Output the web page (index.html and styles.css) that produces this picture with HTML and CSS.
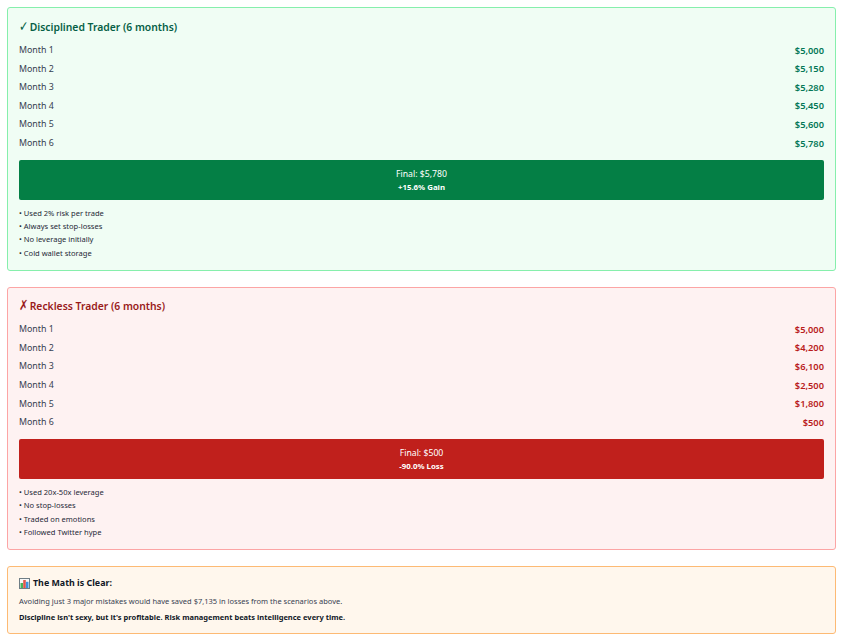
FILE: index.html
```html
<!DOCTYPE html>
<html lang="en">
<head>
<meta charset="utf-8">
<title>Trader comparison</title>
<link rel="stylesheet" href="styles.css">
</head>
<body>
<section class="card card-green">
  <h3 class="title title-green"><span class="mark">✓</span> Disciplined Trader (6 months)</h3>
  <div class="rows">
    <div class="row"><span>Month 1</span><strong class="val-green">$5,000</strong></div>
    <div class="row"><span>Month 2</span><strong class="val-green">$5,150</strong></div>
    <div class="row"><span>Month 3</span><strong class="val-green">$5,280</strong></div>
    <div class="row"><span>Month 4</span><strong class="val-green">$5,450</strong></div>
    <div class="row"><span>Month 5</span><strong class="val-green">$5,600</strong></div>
    <div class="row"><span>Month 6</span><strong class="val-green">$5,780</strong></div>
  </div>
  <div class="final final-green">
    <div class="final-main">Final: $5,780</div>
    <div class="final-sub">+15.6% Gain</div>
  </div>
  <ul class="notes">
    <li>• Used 2% risk per trade</li>
    <li>• Always set stop-losses</li>
    <li>• No leverage initially</li>
    <li>• Cold wallet storage</li>
  </ul>
</section>
<section class="card card-red">
  <h3 class="title title-red"><span class="mark">✗</span> Reckless Trader (6 months)</h3>
  <div class="rows">
    <div class="row"><span>Month 1</span><strong class="val-red">$5,000</strong></div>
    <div class="row"><span>Month 2</span><strong class="val-red">$4,200</strong></div>
    <div class="row"><span>Month 3</span><strong class="val-red">$6,100</strong></div>
    <div class="row"><span>Month 4</span><strong class="val-red">$2,500</strong></div>
    <div class="row"><span>Month 5</span><strong class="val-red">$1,800</strong></div>
    <div class="row"><span>Month 6</span><strong class="val-red">$500</strong></div>
  </div>
  <div class="final final-red">
    <div class="final-main">Final: $500</div>
    <div class="final-sub">-90.0% Loss</div>
  </div>
  <ul class="notes">
    <li>• Used 20x-50x leverage</li>
    <li>• No stop-losses</li>
    <li>• Traded on emotions</li>
    <li>• Followed Twitter hype</li>
  </ul>
</section>
<section class="card card-orange">
  <h4 class="math-title"><svg class="chart" viewBox="0 0 11 11" aria-hidden="true"><rect x="0.5" y="0.5" width="10" height="10" fill="#f7f8f8" stroke="#6f7d85"/><rect x="1.5" y="5" width="2.6" height="5" fill="#45b35a"/><rect x="4.2" y="2" width="2.6" height="8" fill="#e2574c"/><rect x="6.9" y="3.8" width="2.6" height="6.2" fill="#3b92e0"/></svg> The Math is Clear:</h4>
  <p class="math-text">Avoiding just 3 major mistakes would have saved $7,135 in losses from the scenarios above.</p>
  <p class="math-bold">Discipline isn't sexy, but it's profitable. Risk management beats intelligence every time.</p>
</section>
</body>
</html>
```
FILE: styles.css
```css
html, body { margin: 0; padding: 0; background: #fff; }
body {
  padding: 7.4px 12px 9px 7px;
  font-family: "Noto Sans", "Open Sans", sans-serif;
  color: #374151;
  display: flex;
  flex-direction: column;
  gap: 16px;
}
.card {
  border: 1px solid;
  border-radius: 3px;
  padding: 10.7px 11px 9px;
  box-sizing: border-box;
}
.card-green { background: #f0fdf4; border-color: #86efac; height: 263.2px; }
.card-red { background: #fef2f2; border-color: #fca5a5; height: 263.2px; }
.card-orange { background: #fff7ed; border-color: #fdba74; height: 68px; padding-top: 9.7px; }
.title { margin: 0 0 5.7px; height: 16px; font-size: 10.35px; line-height: 16px; font-weight: 600; }
.title-green { color: #065f46; }
.title-red { color: #991b1b; }
.mark {
  display: inline-block;
  width: 8px;
  font-family: "DejaVu Sans", sans-serif;
  font-weight: 400;
  font-size: 14px;
  line-height: 0;
  transform: scaleX(0.8);
  transform-origin: left center;
}
.rows { display: flex; flex-direction: column; }
.row {
  display: flex;
  justify-content: space-between;
  align-items: center;
  height: 18.6px;
  font-size: 8.85px;
  color: #374151;
}
.row strong { font-size: 9.3px; font-weight: 600; }
.val-green { color: #047857; }
.val-red { color: #b91c1c; }
.final {
  margin-top: 7.6px;
  height: 40px;
  border-radius: 2px;
  color: #fff;
  text-align: center;
  display: flex;
  flex-direction: column;
  justify-content: center;
}
.final-green { background: #047f45; }
.final-red { background: #c0201c; }
.final-main { font-size: 8.7px; line-height: 14px; }
.final-sub { font-size: 7.85px; line-height: 12px; font-weight: 700; }
.notes { list-style: none; margin: 6.9px 0 0; padding: 0; font-size: 7.55px; line-height: 13.3px; color: #1f2937; }
.math-title { margin: 0 0 4.4px; font-size: 8.9px; line-height: 14px; font-weight: 700; color: #111827; display: flex; align-items: center; gap: 3px; }
.chart { width: 11px; height: 11px; }
.math-text { margin: 0 0 4.5px; font-size: 7.5px; line-height: 12px; color: #374151; }
.math-bold { margin: 0; font-size: 7.5px; line-height: 12px; font-weight: 700; color: #111827; }
```
